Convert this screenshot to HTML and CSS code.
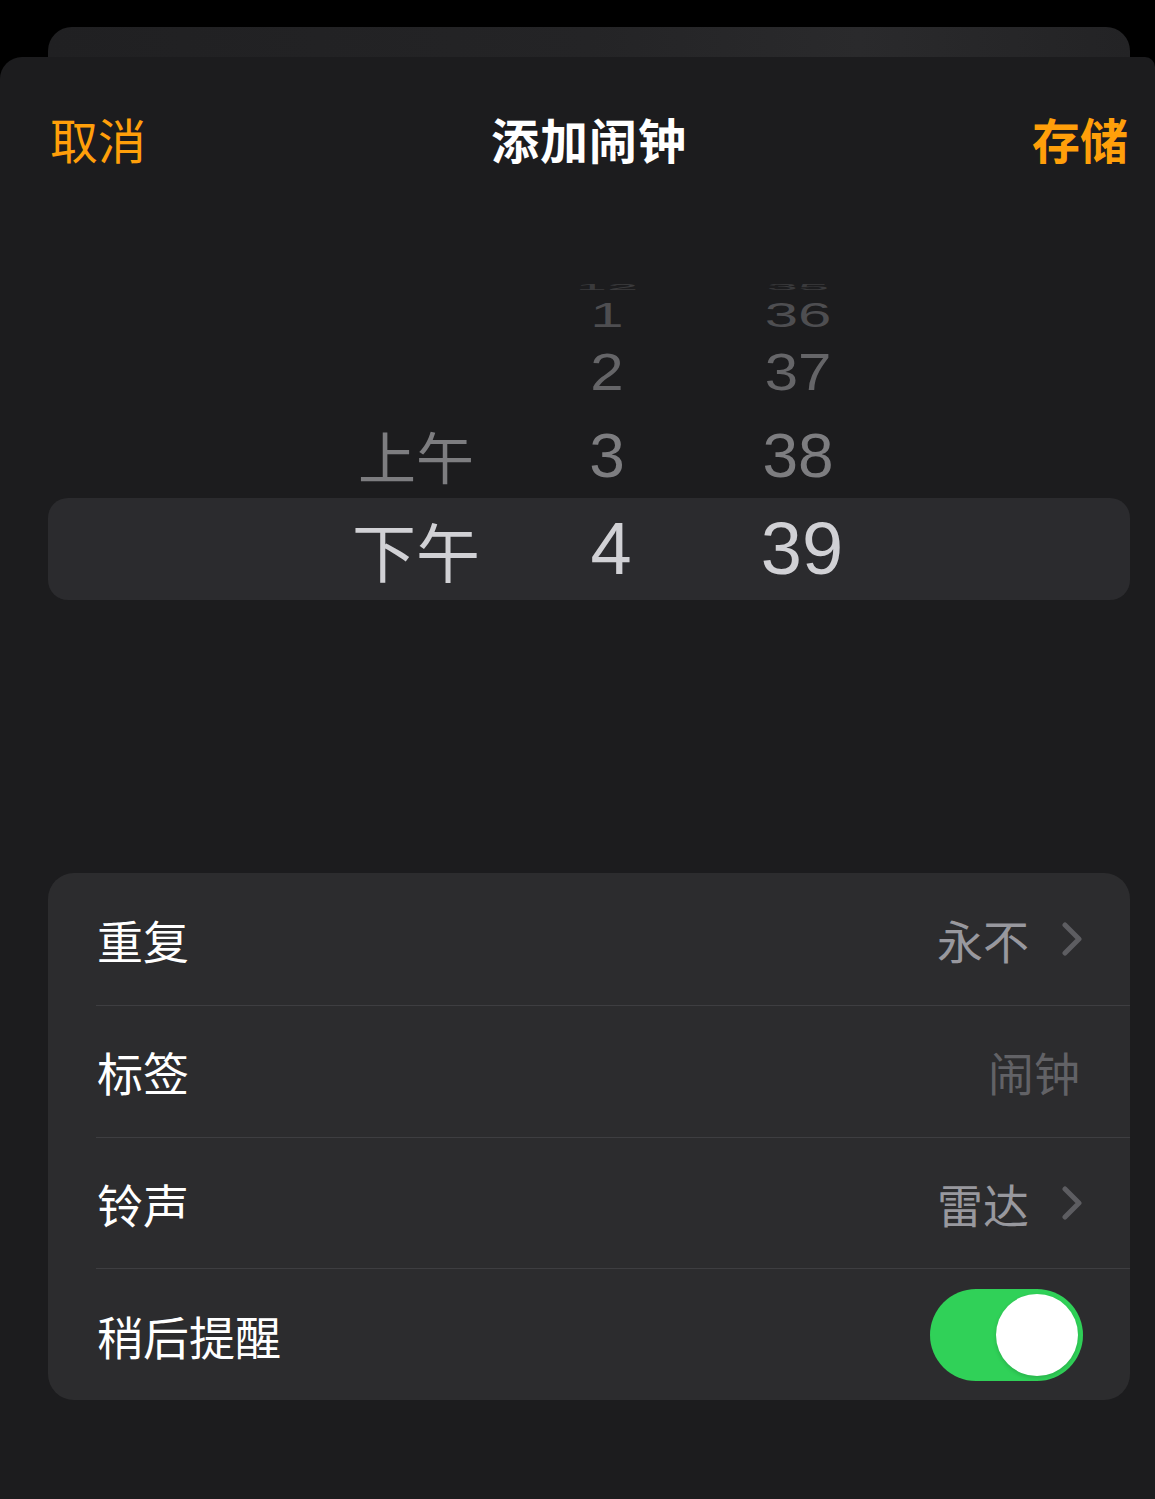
FILE: index.html
```html
<!DOCTYPE html>
<html lang="zh-CN">
<head>
<meta charset="utf-8">
<title>添加闹钟</title>
<link rel="stylesheet" href="styles.css">
</head>
<body>
<div class="screen">
  <div class="back"></div>
  <div class="sheet">
    <header class="nav">
      <span class="nav-btn cancel">取消</span>
      <h1 class="nav-title">添加闹钟</h1>
      <span class="nav-btn save">存储</span>
    </header>

    <div class="picker">
      <div class="prow r4"><span class="c cjk"></span><span class="c num">12</span><span class="c num">35</span></div>
      <div class="prow r3"><span class="c cjk"></span><span class="c num">1</span><span class="c num">36</span></div>
      <div class="prow r2"><span class="c cjk"></span><span class="c num">2</span><span class="c num">37</span></div>
      <div class="prow r1"><span class="c cjk">上午</span><span class="c num">3</span><span class="c num">38</span></div>
      <div class="prow sel"><span class="c cjk">下午</span><span class="c num">4</span><span class="c num">39</span></div>
    </div>

    <div class="list">
      <div class="item">
        <span class="label">重复</span>
        <span class="value">永不</span>
        <svg class="chev" viewBox="0 0 20 34" width="20" height="34"><path d="M3 3 L17 17 L3 31"/></svg>
      </div>
      <div class="item">
        <span class="label">标签</span>
        <span class="value placeholder">闹钟</span>
      </div>
      <div class="item">
        <span class="label">铃声</span>
        <span class="value">雷达</span>
        <svg class="chev" viewBox="0 0 20 34" width="20" height="34"><path d="M3 3 L17 17 L3 31"/></svg>
      </div>
      <div class="item">
        <span class="label">稍后提醒</span>
        <span class="toggle"><span class="knob"></span></span>
      </div>
    </div>
  </div>
</div>
</body>
</html>
```

FILE: styles.css
```css
* { box-sizing: border-box; }

html, body {
  margin: 0;
  padding: 0;
  background: #000;
}

body {
  font-family: "Noto Sans CJK SC", "Noto Sans", sans-serif;
  color: #fff;
}

.screen {
  width: 1155px;
  height: 1499px;
  padding-top: 27px;
  overflow: hidden;
}

.back {
  height: 30px;
  margin: 0 25px 0 48px;
  border-radius: 24px 24px 0 0;
  background: linear-gradient(90deg, #202022 0%, #242426 50%, #2a2a2c 75%, #232325 100%);
}

.sheet {
  height: 1442px;
  background: #1c1c1e;
  border-radius: 22px 10px 0 0;
  overflow: hidden;
}

/* Navigation */
.nav {
  display: grid;
  grid-template-columns: 1fr auto 1fr;
  align-items: center;
  height: 60px;
  margin-top: 51px;
  padding: 0 27px 0 50px;
  font-size: 48px;
  line-height: 60px;
}

.nav-title {
  margin: 0;
  font-size: 48px;
  font-weight: 700;
  color: #fff;
  letter-spacing: 1px;
}

.nav-btn { color: #ff9f0a; }
.cancel { justify-self: start; font-weight: 400; }
.save { justify-self: end; font-weight: 700; }

/* Picker */
.picker {
  margin-top: 110px;
}

.prow {
  display: grid;
  grid-template-columns: 130px 130px 130px;
  column-gap: 61px;
  padding-left: 351px;
  align-items: center;
}

.c {
  display: block;
  text-align: center;
  white-space: nowrap;
}

.num { font-family: "Liberation Sans", Arial, sans-serif; }
.cjk { font-family: "Noto Sans CJK SC", sans-serif; }

.r4 { height: 18px; line-height: 18px; color: #3a3a3c; }
.r4 .num { font-size: 56px; transform: scaleY(0.16); }

.r3 { height: 38px; line-height: 38px; color: #4e4e51; }
.r3 .num { font-size: 60px; transform: scaleY(0.6); }

.r2 { height: 78px; line-height: 78px; color: #656568; }
.r2 .num { font-size: 60px; transform: scaleY(0.86); }

.r1 { height: 86px; line-height: 86px; color: #7d7d80; }
.r1 .num { font-size: 64px; transform: scaleY(0.98); }
.r1 .cjk { font-size: 58px; transform: scaleY(0.95); }

.sel {
  height: 102px;
  line-height: 102px;
  margin: 0 25px 0 48px;
  padding-left: 303px;
  background: #2b2b2e;
  border-radius: 20px;
  color: #d1d1d5;
}
.sel .num { font-size: 74px; transform: translateX(4px); }
.sel .cjk { font-size: 64px; }

/* List */
.list {
  margin: 273px 25px 0 48px;
  height: 527px;
  background: #2c2c2e;
  border-radius: 26px;
  overflow: hidden;
}

.item {
  display: flex;
  align-items: center;
  height: 131.75px;
  margin-left: 48px;
  padding: 0 48px 0 1px;
  font-size: 46px;
}

.item + .item {
  border-top: 1px solid #3e3e41;
}

.label {
  color: #fff;
}

.value {
  margin-left: auto;
  color: #98989e;
}

.value.placeholder {
  color: #626266;
  margin-right: 2px;
}

.chev {
  margin-left: 33px;
  fill: none;
  stroke: #5d5d61;
  stroke-width: 5;
  stroke-linecap: round;
  stroke-linejoin: round;
}

.toggle {
  margin-left: auto;
  margin-right: -1px;
  width: 153px;
  height: 92px;
  border-radius: 46px;
  background: #30d158;
  display: flex;
  align-items: center;
  justify-content: flex-end;
  padding-right: 5px;
}

.knob {
  width: 82px;
  height: 82px;
  border-radius: 50%;
  background: #fff;
  box-shadow: 0 2px 4px rgba(0, 0, 0, 0.15);
}
```
